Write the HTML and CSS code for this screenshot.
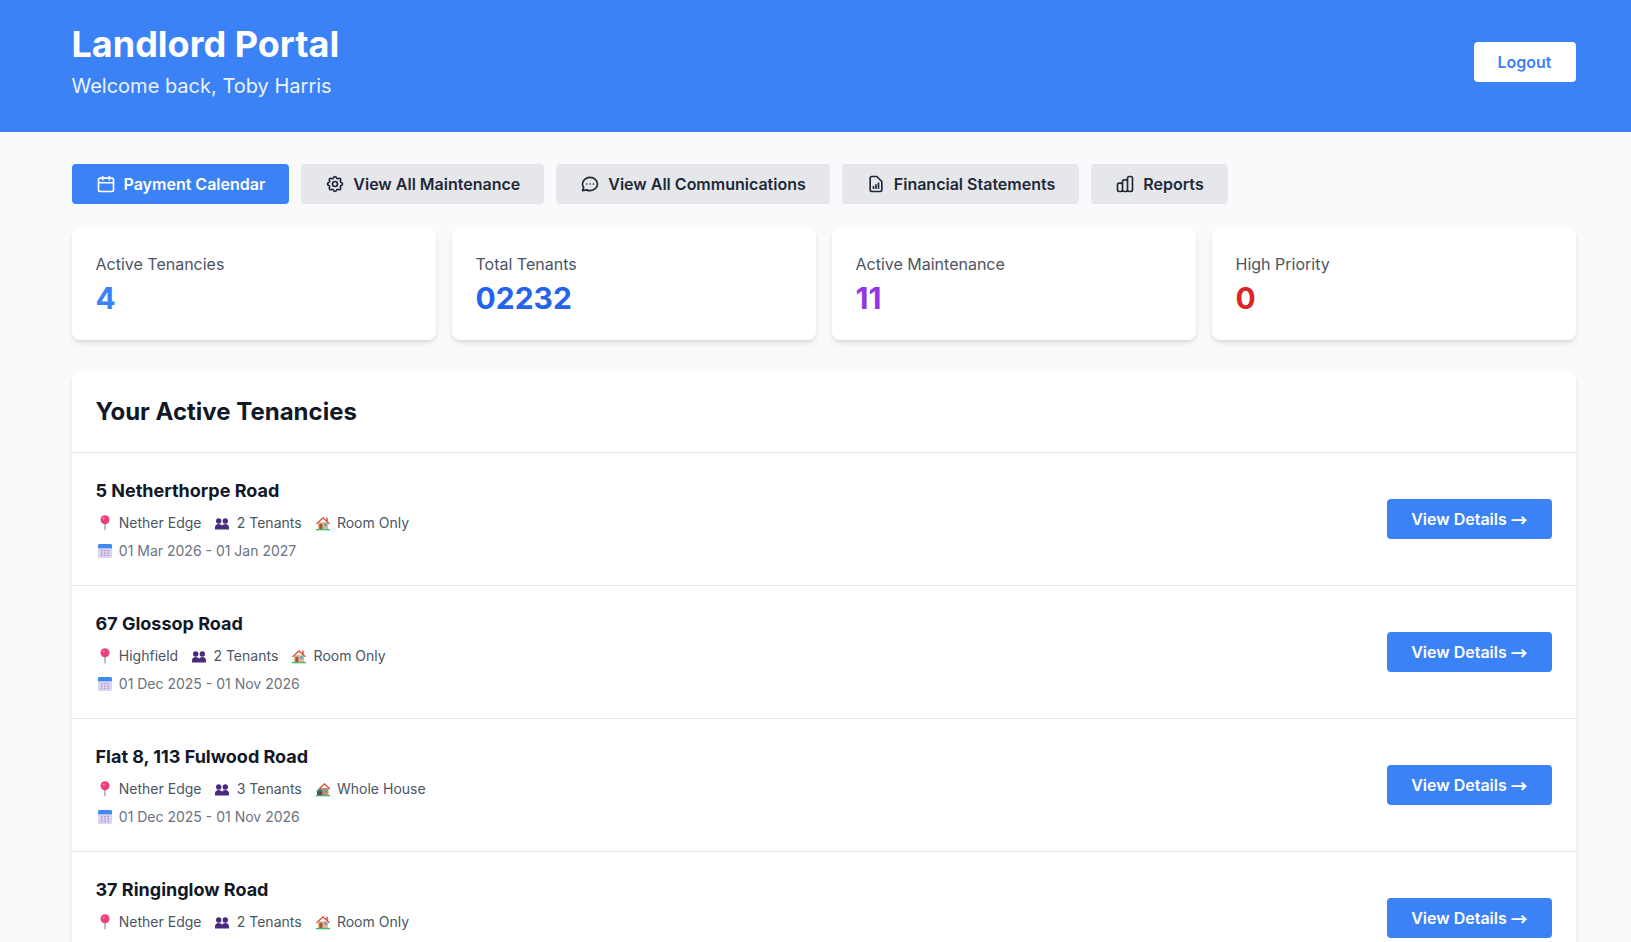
FILE: index.html
```html
<!DOCTYPE html>
<html lang="en">
<head>
<meta charset="utf-8">
<title>Landlord Portal</title>
<link rel="stylesheet" href="styles.css">
</head>
<body>
<svg class="sprite" aria-hidden="true">
  <symbol id="e-pin" viewBox="0 0 18 18">
    <rect x="8.1" y="8" width="1.8" height="8.500" rx=".8" fill="#b4b8bd"/>
    <circle cx="9" cy="5.800" r="4.500" fill="#ee3f76"/>
    <circle cx="7.700" cy="4.500" r="1.100" fill="#f88fae"/>
  </symbol>
  <symbol id="e-people" viewBox="0 0 18 18">
    <circle cx="5.700" cy="7" r="2.700" fill="#4a2a80"/>
    <circle cx="12.300" cy="7" r="2.700" fill="#4a2a80"/>
    <path d="M2 15.600v-2.200c0-2.100 1.500-3.500 3.700-3.500 1.500 0 2.700.7 3.300 1.900.6-1.200 1.800-1.900 3.300-1.900 2.200 0 3.700 1.400 3.700 3.500v2.200z" fill="#4a2a80"/>
  </symbol>
  <symbol id="e-house" viewBox="0 0 18 18">
    <rect x="2" y="15" width="14" height="1.300" fill="#3dba6f"/>
    <path d="M4 8.200h10V15H4z" fill="#e2b58e"/>
    <path d="M9 3 2 9.400l.9.900L9 4.800l6.100 5.500.9-.9-2.300-2.100V3.800h-1.500v2.200z" fill="#d8492f"/>
    <rect x="5.400" y="9.800" width="3" height="5.200" fill="#96593b"/>
    <rect x="10.200" y="9.300" width="2.500" height="2.500" fill="#3f9fe0"/>
  </symbol>
  <symbol id="e-houses" viewBox="0 0 18 18">
    <rect x="2" y="15" width="14" height="1.300" fill="#3dba6f"/>
    <path d="M6 8h8.500v7H6z" fill="#c98d68"/>
    <path d="M10.500 3 4.500 8.600l.9.900 5.100-4.700 5.100 4.700.9-.9z" fill="#d8492f"/>
    <path d="M3 10.800h5.400V15H3z" fill="#5d4a52"/>
    <path d="M2.200 11.200 5.700 8l3.500 3.200z" fill="#2f8f9e"/>
    <rect x="11" y="9.800" width="2.300" height="2.300" fill="#3f9fe0"/>
  </symbol>
  <symbol id="e-cal" viewBox="0 0 18 18">
    <rect x="2" y="2" width="14" height="14" rx="1.500" fill="#dcd2f2"/>
    <path d="M2 6.200V3.500C2 2.700 2.700 2 3.500 2h11c.8 0 1.500.7 1.500 1.500v2.700z" fill="#3f8cf0"/>
    <path d="M5 8h1.300v1.300H5zm3.300 0h1.300v1.300H8.300zm3.300 0h1.300v1.300h-1.300zM5 10.400h1.300v1.300H5zm3.300 0h1.300v1.300H8.300zm3.300 0h1.300v1.300h-1.300zM5 12.800h1.300v1.300H5zm3.300 0h1.300v1.300H8.300zm3.300 0h1.300v1.300h-1.300z" fill="#9a8fc4"/>
  </symbol>
</svg>

<header class="topbar">
  <div class="topbar-inner">
    <div>
      <h1 class="portal-title">Landlord Portal</h1>
      <p class="portal-welcome">Welcome back, Toby Harris</p>
    </div>
    <button class="logout" type="button">Logout</button>
  </div>
</header>

<main class="page">
  <nav class="actions">
    <a class="action action-primary" href="#">
      <svg class="action-icon" viewBox="0 0 24 24"><path d="M8 7V3m8 4V3M3 10.500h18M5 21h14a2 2 0 0 0 2-2V7a2 2 0 0 0-2-2H5a2 2 0 0 0-2 2v12a2 2 0 0 0 2 2z"/></svg>
      Payment Calendar
    </a>
    <a class="action" href="#">
      <svg class="action-icon" viewBox="0 0 24 24"><path d="M10.325 4.317c.426-1.756 2.924-1.756 3.350 0a1.724 1.724 0 0 0 2.573 1.066c1.543-.94 3.310.826 2.370 2.370a1.724 1.724 0 0 0 1.065 2.572c1.756.426 1.756 2.924 0 3.350a1.724 1.724 0 0 0-1.066 2.573c.94 1.543-.826 3.310-2.370 2.370a1.724 1.724 0 0 0-2.572 1.065c-.426 1.756-2.924 1.756-3.350 0a1.724 1.724 0 0 0-2.573-1.066c-1.543.94-3.310-.826-2.370-2.370a1.724 1.724 0 0 0-1.065-2.572c-1.756-.426-1.756-2.924 0-3.350a1.724 1.724 0 0 0 1.066-2.573c-.94-1.543.826-3.310 2.370-2.370.996.608 2.296.07 2.572-1.065z"/><path d="M15 12a3 3 0 1 1-6 0 3 3 0 0 1 6 0z"/></svg>
      View All Maintenance
    </a>
    <a class="action" href="#">
      <svg class="action-icon" viewBox="0 0 24 24"><path d="M8 12h.01M12 12h.01M16 12h.01M21 12c0 4.418-4.030 8-9 8a9.863 9.863 0 0 1-4.255-.949L3 20l1.395-3.720C3.512 15.042 3 13.574 3 12c0-4.418 4.030-8 9-8s9 3.582 9 8z"/></svg>
      View All Communications
    </a>
    <a class="action" href="#">
      <svg class="action-icon" viewBox="0 0 24 24"><path d="M9 17v-2m3 2v-4m3 4v-6m2 10H7a2 2 0 0 1-2-2V5a2 2 0 0 1 2-2h5.586a1 1 0 0 1 .707.293l5.414 5.414a1 1 0 0 1 .293.707V19a2 2 0 0 1-2 2z"/></svg>
      Financial Statements
    </a>
    <a class="action" href="#">
      <svg class="action-icon" viewBox="0 0 24 24"><path d="M9 19v-6a2 2 0 0 0-2-2H5a2 2 0 0 0-2 2v6a2 2 0 0 0 2 2h2a2 2 0 0 0 2-2zm0 0V9a2 2 0 0 1 2-2h2a2 2 0 0 1 2 2v10m-6 0a2 2 0 0 0 2 2h2a2 2 0 0 0 2-2m0 0V5a2 2 0 0 1 2-2h2a2 2 0 0 1 2 2v14a2 2 0 0 1-2 2h-2a2 2 0 0 1-2-2z"/></svg>
      Reports
    </a>
  </nav>

  <section class="stats">
    <div class="stat"><p class="stat-label">Active Tenancies</p><p class="stat-value v-blue">4</p></div>
    <div class="stat"><p class="stat-label">Total Tenants</p><p class="stat-value v-deep">02232</p></div>
    <div class="stat"><p class="stat-label">Active Maintenance</p><p class="stat-value v-purple">11</p></div>
    <div class="stat"><p class="stat-label">High Priority</p><p class="stat-value v-red">0</p></div>
  </section>

  <section class="panel">
    <h2 class="panel-title">Your Active Tenancies</h2>

    <article class="tenancy">
      <div>
        <h3 class="tenancy-name">5 Netherthorpe Road</h3>
        <div class="meta">
          <span class="meta-item"><svg class="emoji"><use href="#e-pin"/></svg>Nether Edge</span>
          <span class="meta-item"><svg class="emoji"><use href="#e-people"/></svg>2 Tenants</span>
          <span class="meta-item"><svg class="emoji"><use href="#e-house"/></svg>Room Only</span>
        </div>
        <div class="meta dates"><span class="meta-item"><svg class="emoji"><use href="#e-cal"/></svg>01 Mar 2026 - 01 Jan 2027</span></div>
      </div>
      <a class="details" href="#">View Details <span class="arrow">→</span></a>
    </article>

    <article class="tenancy">
      <div>
        <h3 class="tenancy-name">67 Glossop Road</h3>
        <div class="meta">
          <span class="meta-item"><svg class="emoji"><use href="#e-pin"/></svg>Highfield</span>
          <span class="meta-item"><svg class="emoji"><use href="#e-people"/></svg>2 Tenants</span>
          <span class="meta-item"><svg class="emoji"><use href="#e-house"/></svg>Room Only</span>
        </div>
        <div class="meta dates"><span class="meta-item"><svg class="emoji"><use href="#e-cal"/></svg>01 Dec 2025 - 01 Nov 2026</span></div>
      </div>
      <a class="details" href="#">View Details <span class="arrow">→</span></a>
    </article>

    <article class="tenancy">
      <div>
        <h3 class="tenancy-name">Flat 8, 113 Fulwood Road</h3>
        <div class="meta">
          <span class="meta-item"><svg class="emoji"><use href="#e-pin"/></svg>Nether Edge</span>
          <span class="meta-item"><svg class="emoji"><use href="#e-people"/></svg>3 Tenants</span>
          <span class="meta-item"><svg class="emoji"><use href="#e-houses"/></svg>Whole House</span>
        </div>
        <div class="meta dates"><span class="meta-item"><svg class="emoji"><use href="#e-cal"/></svg>01 Dec 2025 - 01 Nov 2026</span></div>
      </div>
      <a class="details" href="#">View Details <span class="arrow">→</span></a>
    </article>

    <article class="tenancy">
      <div>
        <h3 class="tenancy-name">37 Ringinglow Road</h3>
        <div class="meta">
          <span class="meta-item"><svg class="emoji"><use href="#e-pin"/></svg>Nether Edge</span>
          <span class="meta-item"><svg class="emoji"><use href="#e-people"/></svg>2 Tenants</span>
          <span class="meta-item"><svg class="emoji"><use href="#e-house"/></svg>Room Only</span>
        </div>
        <div class="meta dates"><span class="meta-item"><svg class="emoji"><use href="#e-cal"/></svg>01 Dec 2025 - 01 Nov 2026</span></div>
      </div>
      <a class="details" href="#">View Details <span class="arrow">→</span></a>
    </article>
  </section>
</main>
</body>
</html>
```

FILE: styles.css
```css
* { box-sizing: border-box; }

html, body {
  margin: 0;
  height: 942px;
  overflow: hidden;
}

body {
  background: #f9fafb;
  font-family: Inter, "Liberation Sans", sans-serif;
  color: #111827;
}

.sprite { display: none; }

h1, h2, h3, p { margin: 0; }

a { text-decoration: none; }

.topbar {
  background: #3b82f6;
  height: 132px;
  padding: 24px 55.5px 0 71.5px;
}

.topbar-inner {
  display: flex;
  justify-content: space-between;
  align-items: center;
}

.portal-title {
  color: #fff;
  font-size: 36px;
  line-height: 40px;
  font-weight: 700;
}

.portal-welcome {
  color: #ebf3fe;
  font-size: 20px;
  line-height: 28px;
  margin-top: 8px;
}

.logout {
  height: 40px;
  padding: 0 24px;
  border: 0;
  border-radius: 4px;
  background: #fff;
  color: #3b82f6;
  font: 600 16px/24px Inter, sans-serif;
}

.page {
  width: 1504px;
  margin-left: 71.5px;
  padding-top: 32px;
}

.actions {
  display: flex;
  gap: 12px;
  margin-bottom: 24px;
}

.action {
  display: flex;
  align-items: center;
  gap: 8px;
  height: 40px;
  padding: 0 24px;
  border-radius: 4px;
  background: #e5e7eb;
  color: #1f2937;
  font-size: 16px;
  line-height: 24px;
  font-weight: 600;
}

.action-primary {
  background: #3b82f6;
  color: #fff;
}

.action-icon {
  width: 20px;
  height: 20px;
  fill: none;
  stroke: currentColor;
  stroke-width: 2;
  stroke-linecap: round;
  stroke-linejoin: round;
}

.stats {
  display: grid;
  grid-template-columns: repeat(4, 1fr);
  gap: 16px;
  margin-bottom: 32px;
}

.stat {
  height: 112px;
  padding: 24px;
  background: #fff;
  border-radius: 8px;
  box-shadow: 0 4px 6px -1px rgba(0,0,0,.1), 0 2px 4px -2px rgba(0,0,0,.1);
}

.stat-label {
  color: #4b5563;
  font-size: 16px;
  line-height: 24px;
}

.stat-value {
  margin-top: 4px;
  font-size: 30px;
  line-height: 36px;
  font-weight: 700;
}

.v-blue { color: #3b82f6; }
.v-deep { color: #2563eb; }
.v-purple { color: #9333ea; }
.v-red { color: #dc2626; }

.panel {
  background: #fff;
  border-radius: 8px;
  box-shadow: 0 4px 6px -1px rgba(0,0,0,.1), 0 2px 4px -2px rgba(0,0,0,.1);
}

.panel-title {
  height: 81px;
  padding: 24px;
  font-size: 24px;
  line-height: 32px;
  font-weight: 700;
  border-bottom: 1px solid #e5e7eb;
}

.tenancy {
  display: flex;
  justify-content: space-between;
  align-items: center;
  padding: 24px;
  border-bottom: 1px solid #e5e7eb;
}

.tenancy-name {
  font-size: 18px;
  line-height: 28px;
  font-weight: 700;
  margin-bottom: 8px;
}

.meta {
  display: flex;
  gap: 12px;
  color: #4b5563;
  font-size: 14px;
  line-height: 20px;
}

.dates {
  color: #6b7280;
  margin-top: 8px;
}

.meta-item {
  display: flex;
  align-items: center;
  gap: 5.3px;
}

.emoji {
  width: 18px;
  height: 18px;
  flex: none;
}

.details {
  height: 40px;
  padding: 0 24px;
  border-radius: 4px;
  background: #3b82f6;
  color: #fff;
  font-size: 16px;
  line-height: 40px;
  font-weight: 600;
}

.arrow {
  font-family: "Noto Sans CJK SC", sans-serif;
  font-size: 16.7px;
  font-weight: 700;
  line-height: 0;
  vertical-align: -1.5px;
}
```
